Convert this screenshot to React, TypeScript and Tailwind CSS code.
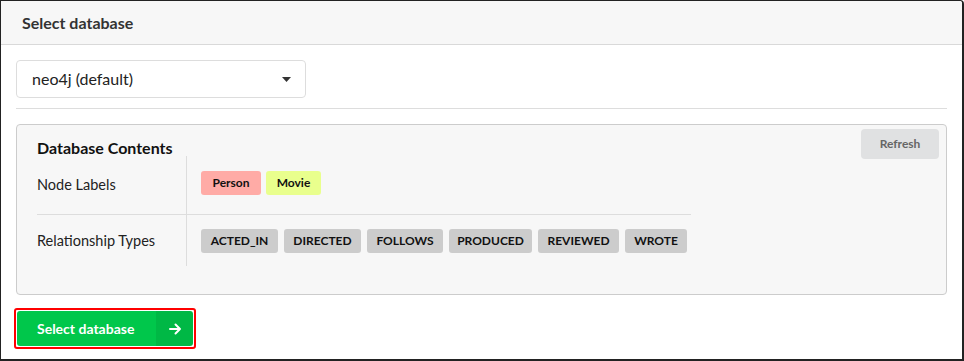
import React from 'react';

const nodeLabels = [
  { name: 'Person', color: 'bg-[#ffaba6]', w: 'w-[60px]' },
  { name: 'Movie', color: 'bg-[#e9ff8d]', w: 'w-[55px]' },
];

const relTypes = [
  { name: 'ACTED_IN', w: 'w-[77px]' },
  { name: 'DIRECTED', w: 'w-[77px]' },
  { name: 'FOLLOWS', w: 'w-[76px]' },
  { name: 'PRODUCED', w: 'w-[83px]' },
  { name: 'REVIEWED', w: 'w-[81px]' },
  { name: 'WROTE', w: 'w-[62px]' },
];

function Badge({ label, color, w }: { label: string; color: string; w: string }) {
  return (
    <span
      className={`inline-flex items-center justify-center h-6 rounded-[3px] text-[12px] font-bold text-[#111] whitespace-nowrap ${w} ${color}`}
    >
      {label}
    </span>
  );
}

export default function App() {
  return (
    <div
      className="w-[964px] h-[361px] bg-white border-t border-l border-r-2 border-b-2 border-[#222] rounded-tr-[4px] overflow-hidden flex flex-col"
      style={{ fontFamily: 'Lato, "Noto Sans", sans-serif' }}
    >
      {/* header */}
      <div className="h-[44px] shrink-0 bg-[#f7f7f7] border-b border-[#d9d9d9] flex items-center px-[21px]">
        <h1 className="text-[16px] font-bold text-[#333]">Select database</h1>
      </div>

      <div className="flex-1 px-[15px] pt-[15px]">
        {/* select */}
        <button className="w-[290px] h-[38px] flex items-center justify-between pl-[15px] pr-[14px] bg-white border border-[#ddd] rounded-[4px] text-[16px] text-[#222]">
          <span>neo4j (default)</span>
          <svg width="9" height="5" viewBox="0 0 9 5">
            <path d="M0 0h9L4.5 5z" fill="#333" />
          </svg>
        </button>

        <div className="mt-[10px] border-t border-[#ddd]" />

        {/* contents */}
        <div className="mt-[15px] h-[171px] bg-[#f7f7f7] border border-[#ccc] rounded-[4px] pl-[20px] pr-[7px] pt-[4px]">
          <div className="flex justify-between items-start">
            <h2 className="mt-[7px] text-[16px] font-bold text-[#111]">Database Contents</h2>
            <button className="w-[78px] h-[30px] rounded-[4px] bg-[#e0e1e2] text-[12px] font-bold text-[#666]">
              Refresh
            </button>
          </div>

          <div className="w-[654px] -mt-[4px]">
            <div className="flex h-[59px] border-b border-[#ddd]">
              <div className="w-[150px] shrink-0 border-r border-[#ddd] flex items-center text-[14.5px] text-[#222]">
                Node Labels
              </div>
              <div className="flex items-center gap-[5px] pl-[14px] pb-[4px]">
                {nodeLabels.map((l) => (
                  <Badge key={l.name} label={l.name} color={l.color} w={l.w} />
                ))}
              </div>
            </div>
            <div className="flex h-[51px]">
              <div className="w-[150px] shrink-0 border-r border-[#ddd] flex items-center text-[14.5px] text-[#222]">
                Relationship Types
              </div>
              <div className="flex items-center gap-[6px] pl-[14px]">
                {relTypes.map((r) => (
                  <Badge key={r.name} label={r.name} color="bg-[#cccccc]" w={r.w} />
                ))}
              </div>
            </div>
          </div>
        </div>

        {/* submit */}
        <div className="mt-[13px] -ml-[2px] inline-flex border-2 border-[#ff0000] rounded-[3px] p-[1px] bg-white">
          <button className="flex h-[35px] rounded-[3px] overflow-hidden text-white">
            <span className="w-[139px] bg-[#00c74b] flex items-center pl-[20px] text-[14px] font-bold">
              Select database
            </span>
            <span className="w-[37px] bg-[#00b845] flex items-center justify-center">
              <svg width="14" height="14" viewBox="0 0 14 14" fill="none" stroke="white" strokeWidth="2" strokeLinecap="round" strokeLinejoin="round">
                <path d="M2 7h10M7.5 2.5 12 7l-4.5 4.5" />
              </svg>
            </span>
          </button>
        </div>
      </div>
    </div>
  );
}
